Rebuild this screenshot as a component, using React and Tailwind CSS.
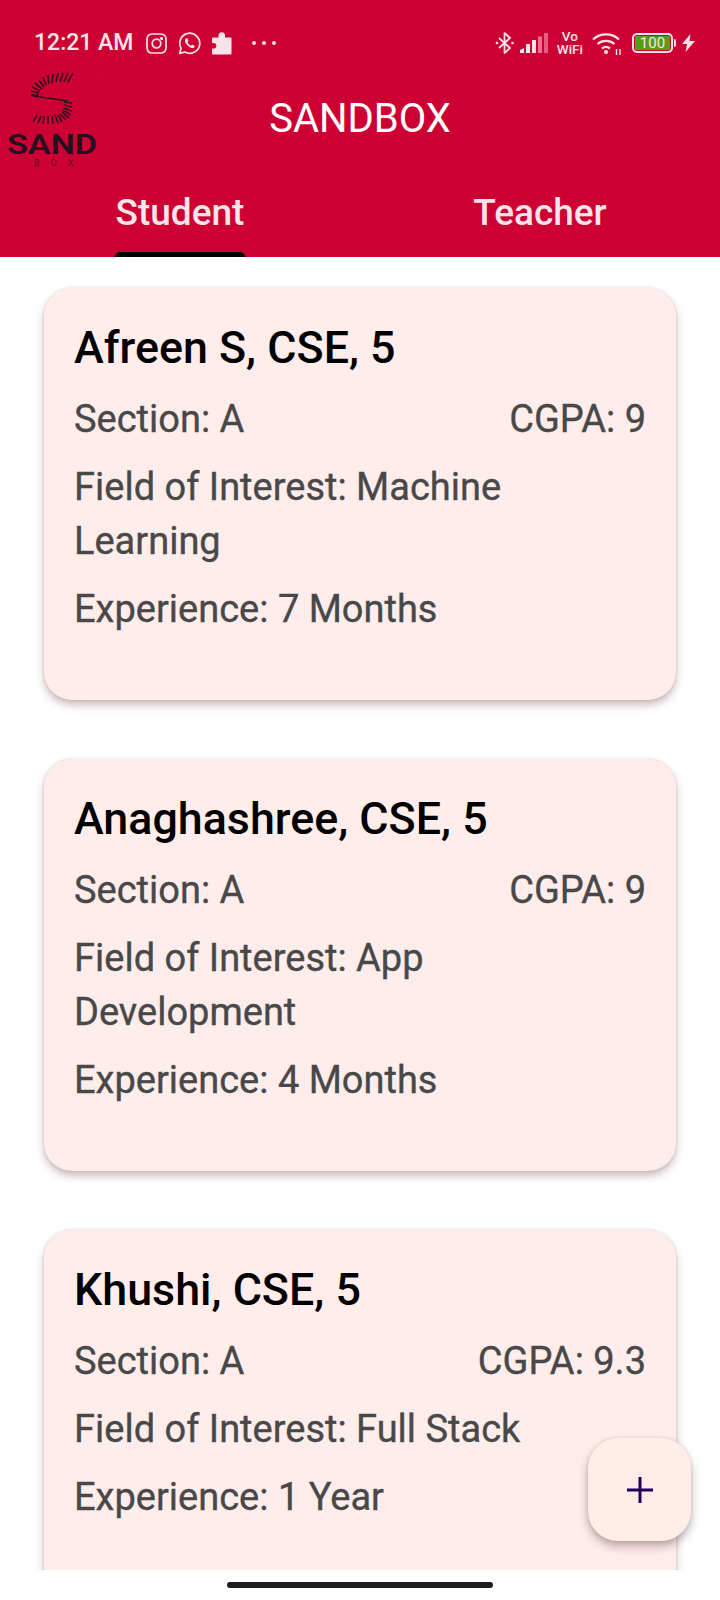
import React from "react";

const font = { fontFamily: "Roboto, sans-serif" };

function SandMark() {
  const strokes = [
    [73, 73, 68, 82], [68, 73, 64, 82], [63, 73, 60, 82], [58, 73, 56, 82], [53, 74, 52, 83], [48, 75, 49, 84],
    [43, 77, 46, 85], [39, 80, 44, 87], [35, 83, 42, 89], [32, 87, 40, 91], [31, 91, 39, 93], [31, 95, 39, 95],
    [72, 103, 64, 102], [72, 107, 64, 105], [72, 111, 64, 108], [71, 115, 63, 110], [69, 118, 62, 112],
    [66, 120, 60, 114], [62, 122, 58, 115], [58, 123, 55, 115], [53, 124, 52, 116], [48, 124, 48, 116],
    [43, 124, 44, 116], [38, 123, 41, 116], [33, 122, 37, 115],
  ];
  return (
    <svg width="120" height="110" viewBox="0 60 120 110" className="block">
      <path d="M78 92L103 74M2 162L34 132" stroke="#c0103a" strokeWidth="3" strokeDasharray="1 2" fill="none" />
      {strokes.map((s, i) => (
        <line key={i} x1={s[0]} y1={s[1]} x2={s[2]} y2={s[3]} stroke="#3a0f22" strokeWidth="1.7" />
      ))}
      <line x1="33" y1="96" x2="68" y2="101" stroke="#2a1020" strokeWidth="1.5" />
    </svg>
  );
}

function Instagram() {
  return (
    <svg width="21" height="21" viewBox="0 0 21 21" fill="none" stroke="#fbe4e9" strokeWidth="1.7">
      <rect x="1" y="1" width="19" height="19" rx="5" />
      <circle cx="10.5" cy="10.5" r="4.3" />
      <circle cx="15.6" cy="5.4" r="0.7" fill="#fbe4e9" />
    </svg>
  );
}

function Whatsapp() {
  return (
    <svg width="23" height="23" viewBox="0 0 23 23" fill="none">
      <path d="M1.6 21.4l1.5-5.2A10 10 0 1 1 7 20l-5.4 1.4z" stroke="#fbe4e9" strokeWidth="1.7" strokeLinejoin="round" />
      <path d="M8 6.4c-.9.5-1.3 1.6-1 2.9.7 2.8 3.6 5.8 6.6 6.6 1.3.3 2.4-.1 2.9-1l.3-1-2.7-1.4-1 1.2c-1.6-.5-3-1.9-3.7-3.6l1.1-1L9.2 6z" fill="#fbe4e9" />
    </svg>
  );
}

function Puzzle() {
  return (
    <svg width="22" height="24" viewBox="0 0 22 24">
      <path d="M1 7.5a1 1 0 0 1 1-1h5.5V5a3.3 3.3 0 1 1 6.5 0v1.5h5.5a1 1 0 0 1 1 1V22.5a1 1 0 0 1-1 1H2a1 1 0 0 1-1-1v-5h1.5a2.8 2.8 0 0 0 0-5.6H1z" fill="#fbe4e9" />
    </svg>
  );
}

function Bluetooth() {
  return (
    <svg width="20" height="24" viewBox="0 0 20 24" fill="none" stroke="#fbe4e9" strokeWidth="1.7" strokeLinejoin="round">
      <path d="M4 7l11 10-5.5 5V2L15 7 4 17" />
      <circle cx="2" cy="12" r="1.3" fill="#fbe4e9" stroke="none" />
      <circle cx="17.5" cy="12" r="1.3" fill="#fbe4e9" stroke="none" />
    </svg>
  );
}

function Signal() {
  return (
    <svg width="28" height="20" viewBox="0 0 28 20">
      <path d="M0 20v-3l4-2v5z" fill="#fbe4e9" />
      <rect x="6" y="11" width="4" height="9" fill="#fbe4e9" />
      <rect x="12" y="7" width="4" height="13" fill="#fbe4e9" />
      <rect x="18" y="3.5" width="4" height="16.5" fill="#e8708c" />
      <rect x="24" y="0" width="4" height="20" fill="#e65c7c" />
    </svg>
  );
}

function Wifi() {
  return (
    <svg width="30" height="24" viewBox="0 0 30 24" fill="none" stroke="#fbe4e9" strokeWidth="2.3">
      <path d="M1 8.5a19 19 0 0 1 26 0" />
      <path d="M5.5 13a13 13 0 0 1 17 0" />
      <path d="M10 17.5a6.5 6.5 0 0 1 8 0" />
      <circle cx="14" cy="21" r="2" fill="#fbe4e9" stroke="none" />
      <path d="M24.5 18v6M28 18v6" strokeWidth="1.4" />
    </svg>
  );
}

function Bolt() {
  return (
    <svg width="13" height="20" viewBox="0 0 13 18">
      <path d="M8.5 0L0 10h5l-1.5 8L13 7H7.5z" fill="#fbe4e9" />
    </svg>
  );
}

function Card({ name, cgpa, field, exp }) {
  return (
    <div className="mx-[44px] h-[412px] shrink-0 rounded-[28px] bg-[#feedeb] px-[30px] pt-[32px] shadow-[0_5px_8px_rgba(90,40,40,0.3),0_0_3px_rgba(90,40,40,0.15)]">
      <div className="text-[44.8px] leading-[56px] font-medium text-black">{name}</div>
      <div className="mt-[16px] flex justify-between text-[38px] leading-[54px] text-[#484848] [-webkit-text-stroke:0.35px_#484848]">
        <span>Section: A</span>
        <span>CGPA: {cgpa}</span>
      </div>
      <div className="mt-[14px] pr-[120px] text-[38px] leading-[54px] text-[#484848] [-webkit-text-stroke:0.35px_#484848]">
        Field of Interest: {field}
      </div>
      <div className="mt-[14px] text-[38px] leading-[54px] text-[#484848] [-webkit-text-stroke:0.35px_#484848]">Experience: {exp}</div>
    </div>
  );
}

export default function App() {
  return (
    <div style={font} className="relative flex h-[1600px] w-[720px] flex-col overflow-hidden bg-white">
      <header className="relative h-[257px] shrink-0 bg-[#cd0033] text-white">
        <div className="flex h-[86px] items-center pl-[34px] pr-[25px] text-[#fbe4e9]">
          <span className="text-[23px] font-medium">12:21 AM</span>
          <div className="ml-[13px] flex items-center gap-[11px]">
            <Instagram />
            <Whatsapp />
            <span className="-ml-[1px]"><Puzzle /></span>
          </div>
          <div className="ml-[19px] flex gap-[6px]">
            <span className="size-[4px] rounded-full bg-[#fbe4e9]" />
            <span className="size-[4px] rounded-full bg-[#fbe4e9]" />
            <span className="size-[4px] rounded-full bg-[#fbe4e9]" />
          </div>
          <div className="ml-auto flex items-center">
            <Bluetooth />
            <span className="ml-[5px]"><Signal /></span>
            <span className="ml-[9px] text-center text-[13.5px] leading-[13px] font-medium">Vo<br />WiFi</span>
            <span className="ml-[9px]"><Wifi /></span>
            <span className="ml-[10px] flex h-[20px] w-[41px] items-center rounded-[5px] border-[2px] border-[#fbe4e9] p-[1px]">
              <span className="flex h-full w-full items-center justify-center bg-[#5a9a1a] text-[15px] leading-none text-[#fbe4e9]">100</span>
            </span>
            <span className="ml-[1px] h-[8px] w-[2px] rounded-r bg-[#fbe4e9]" />
            <span className="ml-[6px]"><Bolt /></span>
          </div>
        </div>
        <div className="flex h-[65px] items-center justify-center text-[40px] leading-none">SANDBOX</div>
        <nav className="flex h-[106px] text-[37px] font-medium text-[#fbe4e9]">
          <div className="flex flex-1 items-start justify-center pt-[40px] leading-[44px]">Student</div>
          <div className="flex flex-1 items-start justify-center pt-[40px] leading-[44px]">Teacher</div>
        </nav>
        <span className="absolute bottom-0 left-[115px] h-[5px] w-[130px] rounded-t-[5px] bg-black" />
        <div className="absolute left-0 top-[60px]">
          <SandMark />
        </div>
        <div className="absolute left-[7px] top-[134px] origin-left text-[28px] leading-[22px] font-semibold text-[#24101f] [transform:scaleX(1.22)]">SAND</div>
        <div className="absolute left-[34px] top-[158px] text-[9px] leading-[10px] tracking-[11px] text-[#5a1028]">BOX</div>
      </header>

      <main className="flex h-[1313px] shrink-0 flex-col gap-[59px] overflow-hidden pt-[31px]">
        <Card name="Afreen S, CSE, 5" cgpa="9" field="Machine Learning" exp="7 Months" />
        <Card name="Anaghashree, CSE, 5" cgpa="9" field="App Development" exp="4 Months" />
        <Card name="Khushi, CSE, 5" cgpa="9.3" field="Full Stack" exp="1 Year" />
      </main>

      <div className="flex flex-1 items-center justify-center bg-white">
        <span className="h-[6px] w-[266px] rounded-full bg-[#1c1c1c]" />
      </div>

      <button className="absolute left-[588px] top-[1438px] flex size-[103px] items-center justify-center rounded-[30px] bg-[#ffedea] shadow-[0_5px_10px_rgba(70,30,30,0.35),0_0_3px_rgba(70,30,30,0.12)]">
        <svg width="26" height="26" viewBox="0 0 26 26" stroke="#21005d" strokeWidth="3"><path d="M13 0v26M0 13h26" /></svg>
      </button>
    </div>
  );
}
